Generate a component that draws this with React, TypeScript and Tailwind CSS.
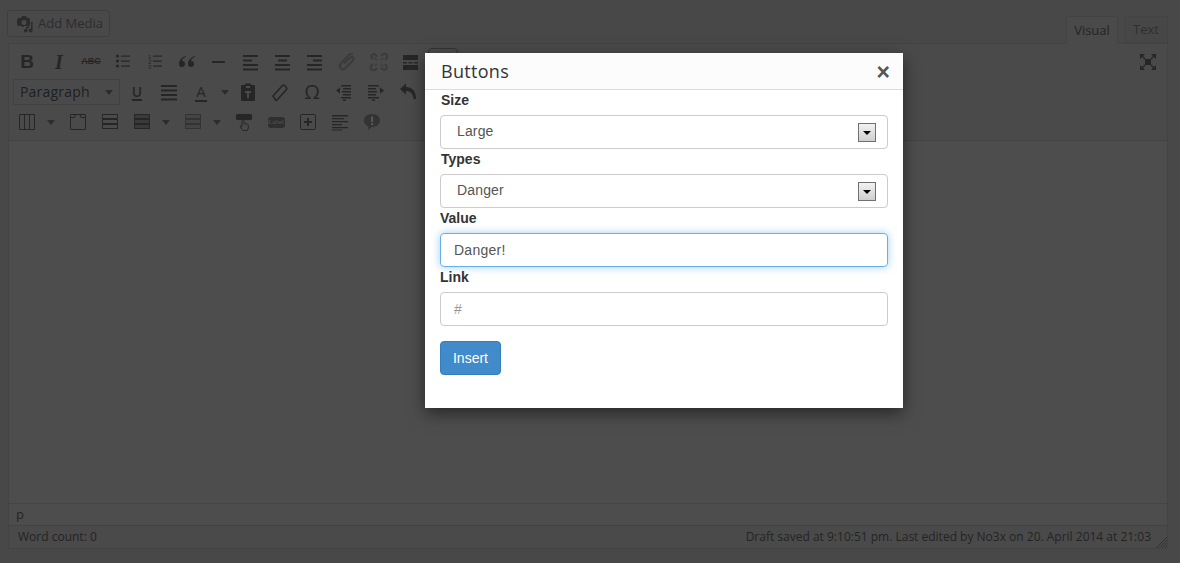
import type { ReactNode } from "react";

const ink = "#262626";

function Svg({ children, w = 20, h = 20 }: { children: ReactNode; w?: number; h?: number }) {
  return (
    <svg width={w} height={h} viewBox={`0 0 ${w} ${h}`} fill={ink} fillRule="evenodd" stroke="none">
      {children}
    </svg>
  );
}

function Tool({ children }: { children: ReactNode }) {
  return <div className="flex h-[30px] w-8 shrink-0 items-center justify-center">{children}</div>;
}

function Caret() {
  return (
    <div className="flex h-[30px] w-[15px] shrink-0 items-center justify-center">
      <div className="h-0 w-0 border-x-[4px] border-t-[5px] border-x-transparent border-t-[#2c2c2c]" />
    </div>
  );
}

function Lines({ rows }: { rows: [number, number][] }) {
  return (
    <Svg>
      {rows.map(([x, w], i) => (
        <rect key={i} x={x} y={3 + i * 4.5} width={w} height="2" />
      ))}
    </Svg>
  );
}

function Rows({ fill, grey }: { fill?: boolean; grey?: boolean }) {
  const c = grey ? "#333" : ink;
  return (
    <Svg w={18} h={16}>
      {[0, 5, 10].map((y) => (
        <rect
          key={y}
          x="1.5"
          y={y + 0.5}
          width="15"
          height="4"
          stroke={c}
          fill={grey ? "#444" : fill ? "#3a3a3a" : "none"}
        />
      ))}
    </Svg>
  );
}

function Bullets({ numbered }: { numbered?: boolean }) {
  return (
    <Svg>
      {[4, 9, 14].map((y, i) => (
        <g key={y}>
          {numbered ? (
            <text x="3" y={y + 2.5} fontSize="6" fontFamily="Liberation Sans, sans-serif" fill={ink}>
              {i + 1}
            </text>
          ) : (
            <circle cx="4.5" cy={y} r="1.6" />
          )}
          <rect x="8" y={y - 0.5} width="9" height="1.2" />
        </g>
      ))}
    </Svg>
  );
}

function LinkIcon({ broken }: { broken?: boolean }) {
  return (
    <svg width="20" height="20" viewBox="0 0 20 20" fill="none" stroke="#3b3b3b" strokeWidth="2">
      {broken ? (
        <>
          <path d="M3.5 7 L2.5 5 a2.5 2.5 0 0 1 3 -3 L8 4.5" />
          <path d="M12 3.5 l1.5 -1 a2.6 2.6 0 0 1 4 4 L16 8" />
          <path d="M8 16 l-1.5 1.5 a2.6 2.6 0 0 1 -4 -4 L4 12" />
          <path d="M12 15.5 l2 2 a2.6 2.6 0 0 0 3.5 -3.5 L16 12" />
          <path strokeWidth="1.2" d="M8 8 5 6M12 8l2-2M8 12l-2 2M12 12l2 2" />
        </>
      ) : (
        <path d="M7 11.5 13 5.5 a2 2 0 0 1 3 3 L8 16.5 a3.2 3.2 0 0 1 -4.5 -4.5 L11 4 a4 4 0 0 1 5 -1.5" />
      )}
    </svg>
  );
}

function AddMediaIcon() {
  return (
    <svg width="18" height="18" viewBox="0 0 18 18" fill="#2c2c2c" fillRule="evenodd">
      <path d="M3 3h2l1-2h4l1 2h1.5A1.5 1.5 0 0 1 14 4.5V10a1 1 0 0 1-1 1H8v1H6v-1H3a2 2 0 0 1-2-2V5a2 2 0 0 1 2-2zm5 2a2.5 2.5 0 1 0 0 5 2.5 2.5 0 0 0 0-5z" />
      <path d="M15 7h1.6v8.500a2 2 0 1 1-1.600-2V7zM10 12l3-.8V13h-1.500v2.800a1.800 1.800 0 1 1-1.500-1.800v-2z" />
    </svg>
  );
}

function Row1() {
  return (
    <div className="flex h-[30px] items-center">
      <Tool>
        <span className="font-['Liberation_Sans',sans-serif] text-[19px] font-bold text-[#262626]">B</span>
      </Tool>
      <Tool>
        <span className="font-['Liberation_Serif',serif] text-[20px] font-bold text-[#262626] italic">I</span>
      </Tool>
      <Tool>
        <span className="font-['Liberation_Sans',sans-serif] text-[9px] font-bold text-[#262626] line-through">ABC</span>
      </Tool>
      <Tool>
        <Bullets />
      </Tool>
      <Tool>
        <Bullets numbered />
      </Tool>
      <Tool>
        <Svg>
          <path d="M9 4C5 5 2 8 2 12a3 3 0 1 0 3-3c0-2 2-3.500 4-4zM18 4c-4 1-7 4-7 8a3 3 0 1 0 3-3c0-2 2-3.500 4-4z" />
        </Svg>
      </Tool>
      <Tool>
        <Svg>
          <rect x="3" y="9" width="13" height="2" />
        </Svg>
      </Tool>
      <Tool>
        <Lines rows={[[2, 15], [2, 9], [2, 15], [2, 15]]} />
      </Tool>
      <Tool>
        <Lines rows={[[2, 15], [5, 9], [2, 15], [2, 15]]} />
      </Tool>
      <Tool>
        <Lines rows={[[2, 15], [8, 9], [2, 15], [2, 15]]} />
      </Tool>
      <Tool>
        <LinkIcon />
      </Tool>
      <Tool>
        <LinkIcon broken />
      </Tool>
      <Tool>
        <Svg>
          <path d="M2 3h15v5H2zM2 13h15v5H2zM2 10h4v1.500H2zM7.500 10h4v1.500h-4zM13 10h4v1.500h-4z" />
        </Svg>
      </Tool>
      <div className="ml-px h-[28px] w-[30px] rounded-sm border border-[#333]" />
      <div className="mr-[3px] ml-auto">
        <Tool>
          <Svg>
            <path d="M7 7h6v6H7zM2 2h5L5 4l2.500 2.500-1 1L4 5 2 7zM18 2v5l-2-2-2.500 2.500-1-1L15 4l-2-2zM2 18v-5l2 2 2.500-2.500 1 1L5 16l2 2zM18 18h-5l2-2-2.500-2.500 1-1L16 15l2-2z" />
          </Svg>
        </Tool>
      </div>
    </div>
  );
}

function Row2() {
  return (
    <div className="flex h-[30px] items-center">
      <div className="ml-[2px] flex h-[26px] w-[107px] shrink-0 items-center justify-between border border-[#404040] pr-[6px] pb-[2px] pl-[6px] text-[14px] tracking-[0.2px] text-[#1c2024]">
        <span>Paragraph</span>
        <div className="mt-[2px] h-0 w-0 border-x-[4px] border-t-[5px] border-x-transparent border-t-[#2c2c2c]" />
      </div>
      <div className="w-px shrink-0" />
      <Tool>
        <span className="border-b-2 border-[#262626] font-['Open_Sans',sans-serif] text-[14px] leading-[15px] font-semibold text-[#262626]">U</span>
      </Tool>
      <Tool>
        <Lines rows={[[2, 16], [2, 16], [2, 16], [2, 16]]} />
      </Tool>
      <Tool>
        <span className="border-b-2 border-[#262626] px-px font-['Open_Sans',sans-serif] text-[15px] leading-[17px] text-[#262626]">A</span>
      </Tool>
      <Caret />
      <Tool>
        <Svg>
          <path d="M7 3V1.500h6V3h3a1 1 0 0 1 1 1v14a1 1 0 0 1-1 1H4a1 1 0 0 1-1-1V4a1 1 0 0 1 1-1zm1 1v2h4V4zm-1 5v2h2v5h2v-5h2V9z" />
        </Svg>
      </Tool>
      <Tool>
        <svg width="20" height="20" viewBox="0 0 20 20" fill="none" stroke="#262626" strokeWidth="1.600">
          <path d="M3 14 12.500 3.500 a1.500 1.500 0 0 1 2 0 l2 2 a1.500 1.500 0 0 1 0 2 L7 18 a1 1 0 0 1-1.500 0z" />
        </svg>
      </Tool>
      <Tool>
        <span className="font-['Open_Sans',sans-serif] text-[20px] text-[#262626]">Ω</span>
      </Tool>
      <Tool>
        <Svg>
          <path d="M7 3h10v1.500H7zM9 6h8v1.500H9zM8 9h9v1.500H8zM9 12h8v1.500H9zM7 15h10v1.500H7zM9 17.500h3V19H9zM2 8.500 6 5.500v6z" />
        </Svg>
      </Tool>
      <Tool>
        <Svg>
          <path d="M2 3h11v1.500H2zM2 6h8v1.500H2zM2 9h9v1.500H2zM2 12h8v1.500H2zM2 15h11v1.500H2zM6 17.500h3V19H6zM18 8.500 14 5.500v6z" />
        </Svg>
      </Tool>
      <Tool>
        <Svg>
          <path d="M2 7 8 1.500V5c6 0 10 4 10 12h-2.500c0-5-3-8-7.500-8v3.500z" />
        </Svg>
      </Tool>
    </div>
  );
}

function Row3() {
  return (
    <div className="flex h-[30px] items-center">
      <Tool>
        <svg width="18" height="16" viewBox="0 0 18 16" fill="none" stroke="#262626">
          <path d="M1.500 .5h15v15h-15zM6.500 .5v15M11.500 .5v15" />
        </svg>
      </Tool>
      <Caret />
      <div className="w-1 shrink-0" />
      <Tool>
        <svg width="18" height="16" viewBox="0 0 18 16" fill="none" stroke="#262626">
          <path d="M1.500 .5h15v15h-15zM1.500 3.500h4l1-3M11 .5l1 3h4.500" />
        </svg>
      </Tool>
      <Tool>
        <Rows />
      </Tool>
      <Tool>
        <Rows fill />
      </Tool>
      <Caret />
      <div className="w-1 shrink-0" />
      <Tool>
        <Rows fill grey />
      </Tool>
      <Caret />
      <div className="w-1 shrink-0" />
      <Tool>
        <svg width="18" height="18" viewBox="0 0 18 18">
          <rect x="1" y="1" width="16" height="6" rx="1.500" fill="#262626" />
          <path
            d="M7 7.500a1 1 0 0 1 2 0v3l3.500.8a1 1 0 0 1 .8 1V15l-1 2.500H8L5 13.500l1-.8 1 1z"
            fill="#4a4a4a"
            stroke="#262626"
          />
        </svg>
      </Tool>
      <Tool>
        <span className="flex h-[11px] w-[17px] items-center justify-center rounded-[3px] bg-[#2f2f2f] font-['Liberation_Serif',serif] text-[7px] text-[#555]">
          Label
        </span>
      </Tool>
      <Tool>
        <svg width="18" height="18" viewBox="0 0 18 18" fill="none" stroke="#262626">
          <rect x="1.500" y="1.500" width="15" height="15" rx="1" />
          <path strokeWidth="2" d="M9 5v8M5 9h8" />
        </svg>
      </Tool>
      <Tool>
        <Svg>
          <path d="M2 3h16v1.500H2zM2 6h12v1.200H2zM2 9h16v1.200H2zM2 12h10v1.200H2zM2 15h16v1.200H2zM2 17.500h10v1H2z" />
        </Svg>
      </Tool>
      <Tool>
        <Svg>
          <path d="M10 2c4.500 0 8 2.800 8 6.500S14.500 15 10 15l-4 3 .5-3.500C3.500 13.500 2 11.200 2 8.500 2 4.800 5.500 2 10 2z" fill="#333" />
          <path d="M9 4.500h2.200V10H9zM9 11h2.200v2H9z" fill="#555" />
        </Svg>
      </Tool>
    </div>
  );
}

function Label({ children, nudge }: { children: ReactNode; nudge?: boolean }) {
  return (
    <label className={nudge ? "mb-[5px] ml-px block h-5 text-[14px] leading-5 font-bold text-[#333]" : "mb-[5px] block h-5 text-[14px] leading-5 font-bold text-[#333]"}>
      {children}
    </label>
  );
}

function SelectField({ value }: { value: string }) {
  return (
    <div className="relative">
      <select
        defaultValue={value}
        className="block h-[34px] w-full appearance-none rounded border border-[#ccc] bg-white pb-[2px] pl-4 text-[14px] tracking-[0.15px] text-[#555] outline-none"
      >
        <option>{value}</option>
      </select>
      <div className="absolute top-[8px] right-[12px] flex h-[19px] w-[18px] items-center justify-center border border-[#707070] bg-gradient-to-b from-[#f2f2f2] to-[#cfcfcf]">
        <div className="h-0 w-0 border-x-[4px] border-t-[4px] border-x-transparent border-t-black" />
      </div>
    </div>
  );
}

function Modal() {
  return (
    <div className="absolute top-[53px] left-[425px] w-[478px] bg-white font-['Liberation_Sans',sans-serif] shadow-[0_5px_15px_rgba(0,0,0,0.5)]">
      <div className="flex h-[37px] items-center justify-between border-b border-[#dcdcdc] bg-[#fcfcfc] pr-[13px] pl-4">
        <h2 className="font-['Open_Sans',sans-serif] text-[18px] tracking-[0.3px] text-[#333]">Buttons</h2>
        <span className="mt-[2px] font-['Liberation_Sans',sans-serif] text-[23px] leading-none font-bold text-[#555]">×</span>
      </div>
      <div className="px-[15px] pb-[33px]">
        <Label nudge>Size</Label>
        <SelectField value="Large" />
        <Label nudge>Types</Label>
        <SelectField value="Danger" />
        <Label>Value</Label>
        <input
          defaultValue="Danger!"
          className="block h-[34px] w-full rounded border border-[#66afe9] px-[13px] text-[14px] tracking-[0.25px] text-[#555] shadow-[0_0_8px_rgba(102,175,233,0.6)] outline-none"
        />
        <Label>Link</Label>
        <input
          placeholder="#"
          className="block h-[34px] w-full rounded border border-[#ccc] px-[13px] text-[14px] text-[#555] outline-none placeholder:text-[#999]"
        />
        <button className="mt-[15px] block h-[34px] w-[61px] rounded border border-[#357ebd] bg-[#428bca] text-[14px] text-white">
          Insert
        </button>
      </div>
    </div>
  );
}

export default function App() {
  return (
    <div className="relative h-[563px] w-[1180px] overflow-hidden bg-[#484848] font-['Open_Sans',sans-serif] text-[#242424]">
      <div className="flex h-full flex-col pt-[10px] pr-3 pb-[14px] pl-2">
        <div className="flex h-[33px] shrink-0 items-start justify-between">
          <button className="-ml-px flex h-[27px] w-[103px] items-center gap-1 rounded-[3px] border border-[#3e3e3e] bg-[#494949] pl-2 text-[13px] text-[#2c2c2c]">
            <AddMediaIcon />
            Add Media
          </button>
          <div className="mt-[6px] flex items-start gap-[6px] text-[13px]">
            <div className="relative z-10 flex h-[28px] w-[52px] items-center justify-center border border-b-0 border-[#434343] bg-[#4a4a4a]">Visual</div>
            <div className="flex h-[27px] w-[44px] items-center justify-center border border-[#434343] bg-[#474747] text-[#303030]">Text</div>
          </div>
        </div>
        <div className="flex min-h-0 flex-1 flex-col border border-[#434343] bg-[#4d4d4d]">
          <div className="shrink-0 border-b border-[#434343] bg-[#4a4a4a] pt-[3px] pb-[3px] pl-[2px]">
            <Row1 />
            <Row2 />
            <Row3 />
          </div>
          <div className="flex-1" />
          <div className="flex h-[22px] shrink-0 items-center border-t border-[#454545] pl-[7px] text-[13px]">p</div>
          <div className="relative flex h-[23px] shrink-0 items-center justify-between border-t border-[#434343] bg-[#4a4a4a] pr-4 pl-[9px] text-[12px]">
            <span>Word count: 0</span>
            <span>Draft saved at 9:10:51 pm. Last edited by No3x on 20. April 2014 at 21:03</span>
            <svg className="absolute right-0 bottom-0" width="12" height="12" viewBox="0 0 12 12" stroke="#333" fill="none">
              <path d="M12 1 1 12M12 4 4 12M12 7 7 12M12 10 10 12" />
            </svg>
          </div>
        </div>
      </div>
      <Modal />
    </div>
  );
}
